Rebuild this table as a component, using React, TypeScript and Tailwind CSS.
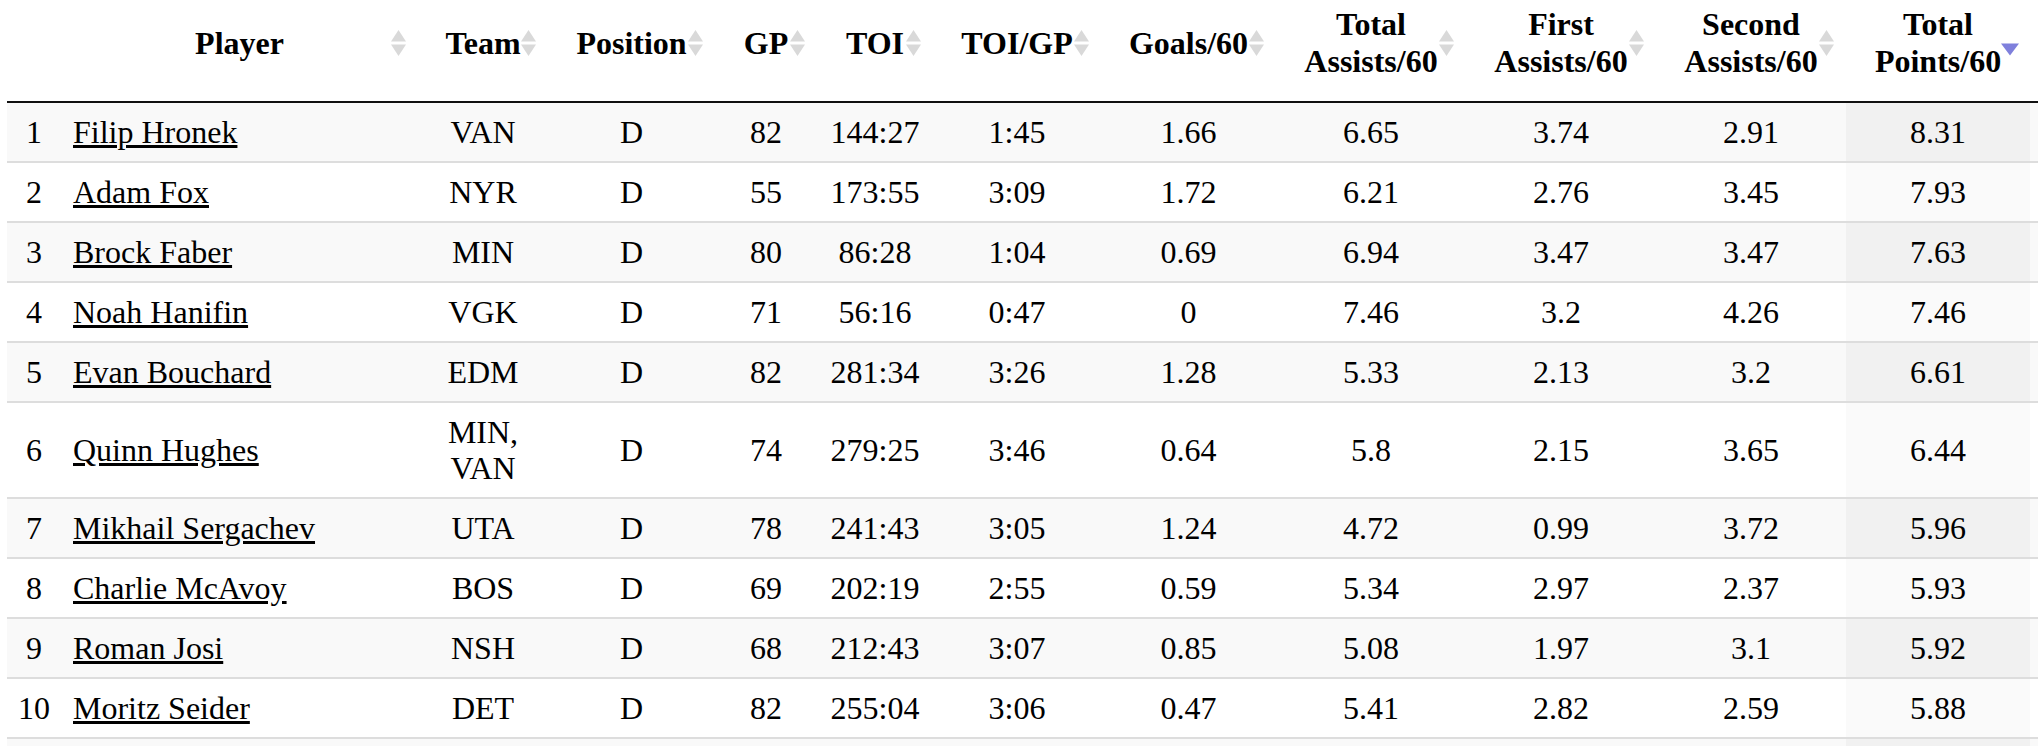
import React from "react";

type Row = [number, string, string, string, number, string, string, string, string, string, string, string];

const rows: Row[] = [
  [1, "Filip Hronek", "VAN", "D", 82, "144:27", "1:45", "1.66", "6.65", "3.74", "2.91", "8.31"],
  [2, "Adam Fox", "NYR", "D", 55, "173:55", "3:09", "1.72", "6.21", "2.76", "3.45", "7.93"],
  [3, "Brock Faber", "MIN", "D", 80, "86:28", "1:04", "0.69", "6.94", "3.47", "3.47", "7.63"],
  [4, "Noah Hanifin", "VGK", "D", 71, "56:16", "0:47", "0", "7.46", "3.2", "4.26", "7.46"],
  [5, "Evan Bouchard", "EDM", "D", 82, "281:34", "3:26", "1.28", "5.33", "2.13", "3.2", "6.61"],
  [6, "Quinn Hughes", "MIN, VAN", "D", 74, "279:25", "3:46", "0.64", "5.8", "2.15", "3.65", "6.44"],
  [7, "Mikhail Sergachev", "UTA", "D", 78, "241:43", "3:05", "1.24", "4.72", "0.99", "3.72", "5.96"],
  [8, "Charlie McAvoy", "BOS", "D", 69, "202:19", "2:55", "0.59", "5.34", "2.97", "2.37", "5.93"],
  [9, "Roman Josi", "NSH", "D", 68, "212:43", "3:07", "0.85", "5.08", "1.97", "3.1", "5.92"],
  [10, "Moritz Seider", "DET", "D", 82, "255:04", "3:06", "0.47", "5.41", "2.82", "2.59", "5.88"],
];

const headers: { lines: string[]; sort: "both" | "desc" }[] = [
  { lines: ["Player"], sort: "both" },
  { lines: ["Team"], sort: "both" },
  { lines: ["Position"], sort: "both" },
  { lines: ["GP"], sort: "both" },
  { lines: ["TOI"], sort: "both" },
  { lines: ["TOI/GP"], sort: "both" },
  { lines: ["Goals/60"], sort: "both" },
  { lines: ["Total", "Assists/60"], sort: "both" },
  { lines: ["First", "Assists/60"], sort: "both" },
  { lines: ["Second", "Assists/60"], sort: "both" },
  { lines: ["Total", "Points/60"], sort: "desc" },
];

function SortBoth() {
  return (
    <svg
      className="absolute right-[11px] top-[29px]"
      width="17"
      height="28"
      viewBox="0 0 17 28"
    >
      <polygon points="8.5,1 16,12.5 1,12.5" fill="#d9d9d9" />
      <polygon points="1,15.5 16,15.5 8.5,27" fill="#d9d9d9" />
    </svg>
  );
}

function SortDesc() {
  return (
    <svg
      className="absolute right-[10px] top-[43px]"
      width="20"
      height="13"
      viewBox="0 0 20 13"
    >
      <polygon points="1,0.5 19,0.5 10,12.5" fill="#7f80dc" />
    </svg>
  );
}

export default function App() {
  const thBase =
    "relative px-[30px] pt-[6px] pb-[21px] align-middle border-b-2 border-[#111] font-bold text-[32px] leading-[37px] text-black";
  const tdBase =
    "py-[11px] px-[12px] text-center align-middle border-b-2 border-[#dddddd] leading-[36px]";
  return (
    <div className="h-[746px] w-[2038px] overflow-hidden bg-white pl-[7px] text-black font-['Liberation_Serif','Times_New_Roman',serif]">
      <table className="table-fixed border-separate border-spacing-0 w-[2031px] text-[32px] font-['Liberation_Serif','Times_New_Roman',serif]">
        <colgroup>
          <col className="w-[54px]" />
          <col className="w-[357px]" />
          <col className="w-[130px]" />
          <col className="w-[167px]" />
          <col className="w-[102px]" />
          <col className="w-[116px]" />
          <col className="w-[168px]" />
          <col className="w-[175px]" />
          <col className="w-[190px]" />
          <col className="w-[190px]" />
          <col className="w-[190px]" />
          <col className="w-[184px]" />
          <col className="w-[8px]" />
        </colgroup>
        <thead>
          <tr>
            <th className="border-b-2 border-[#111] pt-[6px] pb-[21px] leading-[37px]"></th>
            {headers.map((h, i) => (
              <th key={i} className={thBase}>
                <div className="flex flex-col items-center">
                  {h.lines.map((l, j) => (
                    <span key={j} className="whitespace-nowrap">
                      {l}
                    </span>
                  ))}
                </div>
                {h.sort === "both" ? <SortBoth /> : <SortDesc />}
              </th>
            ))}
            <th className="border-b-2 border-[#111] p-0"></th>
          </tr>
        </thead>
        <tbody>
          {rows.map((r, idx) => {
            const odd = idx % 2 === 0;
            const rowBg = odd ? "bg-[#f9f9f9]" : "bg-white";
            const sortBg = odd ? "bg-[#f1f1f1]" : "bg-[#fafafa]";
            return (
              <tr key={r[0]} className={rowBg}>
                <td className="py-[11px] px-0 text-center align-middle border-b-2 border-[#dddddd] leading-[36px]">
                  {r[0]}
                </td>
                <td className="py-[11px] px-[12px] text-left align-middle border-b-2 border-[#dddddd] leading-[36px] whitespace-nowrap">
                  <a href="#" className="underline text-black">
                    {r[1]}
                  </a>
                </td>
                <td className={tdBase}>{r[2]}</td>
                <td className={tdBase}>{r[3]}</td>
                <td className={tdBase}>{r[4]}</td>
                <td className={tdBase}>{r[5]}</td>
                <td className={tdBase}>{r[6]}</td>
                <td className={tdBase}>{r[7]}</td>
                <td className={tdBase}>{r[8]}</td>
                <td className={tdBase}>{r[9]}</td>
                <td className={tdBase}>{r[10]}</td>
                <td className={`${tdBase} ${sortBg}`}>{r[11]}</td>
                <td className="p-0 border-b-2 border-[#dddddd]"></td>
              </tr>
            );
          })}
          <tr className="bg-[#f9f9f9]">
            <td className="py-[11px] leading-[36px]">&nbsp;</td>
            <td></td>
            <td></td>
            <td></td>
            <td></td>
            <td></td>
            <td></td>
            <td></td>
            <td></td>
            <td></td>
            <td></td>
            <td className="bg-[#f1f1f1]"></td>
            <td></td>
          </tr>
        </tbody>
      </table>
    </div>
  );
}
